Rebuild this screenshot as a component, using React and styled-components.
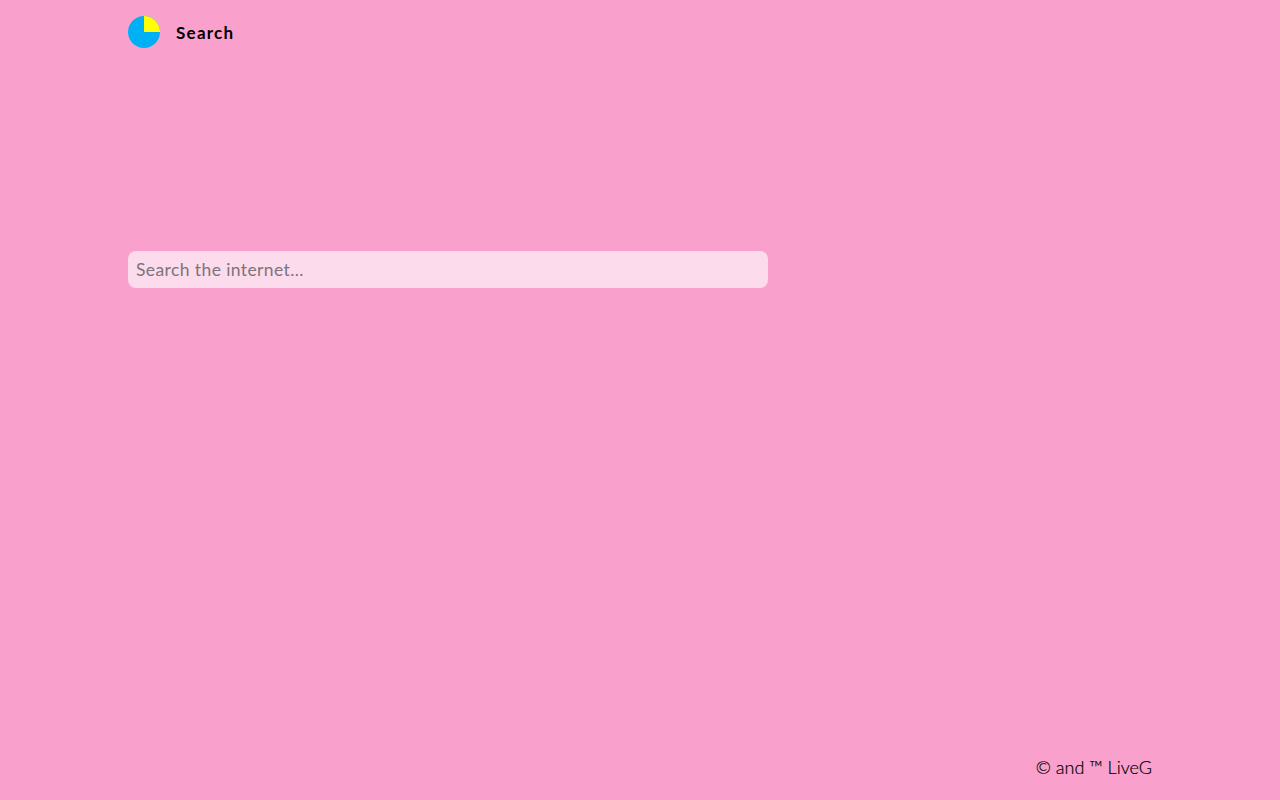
import React from "react";
import styled, { createGlobalStyle } from "styled-components";

const Global = createGlobalStyle`
  html, body { margin: 0; padding: 0; height: 100%; }
  body { background: #faa0cc; font-family: "Lato", "Liberation Sans", sans-serif; color: #000; }
`;

const Page = styled.div`
  box-sizing: border-box;
  height: 800px;
  padding: 16px 128px 0;
  display: flex;
  flex-direction: column;
`;

const Header = styled.header`
  display: flex;
  align-items: center;
  gap: 16px;
  height: 32px;
`;

const Title = styled.span`
  font-size: 17px;
  line-height: 34px;
  height: 32px;
  font-weight: 700;
  letter-spacing: 1.25px;
`;

const Main = styled.main`
  flex: 1;
  padding-top: 203px;
`;

const SearchInput = styled.input`
  box-sizing: border-box;
  display: block;
  width: 640px;
  height: 37px;
  padding: 0 8px 1px;
  border: none;
  outline: none;
  border-radius: 8px;
  background: #fcdcec;
  color: #000;
  font-family: inherit;
  font-size: 17.5px;
  font-weight: 400;
  letter-spacing: 0.4px;
  &::placeholder { color: #7d7379; opacity: 1; }
`;

const Footer = styled.footer`
  display: flex;
  justify-content: flex-end;
  height: 44px;
`;

const Copy = styled.span`
  font-size: 18px;
  font-weight: 300;
  line-height: 22px;
  color: #000;
  -webkit-text-stroke: 0.2px #000;
`;

const Logo = () => (
  <svg width="32" height="32" viewBox="0 0 32 32" aria-hidden="true">
    <circle cx="16" cy="16" r="16" fill="#00b0f4" />
    <path d="M16 16V0A16 16 0 0 1 32 16Z" fill="#ffff00" />
  </svg>
);

export default function App() {
  return (
    <Page>
      <Global />
      <Header>
        <Logo />
        <Title>Search</Title>
      </Header>
      <Main>
        <SearchInput placeholder="Search the internet…" />
      </Main>
      <Footer>
        <Copy>© and ™ LiveG</Copy>
      </Footer>
    </Page>
  );
}
